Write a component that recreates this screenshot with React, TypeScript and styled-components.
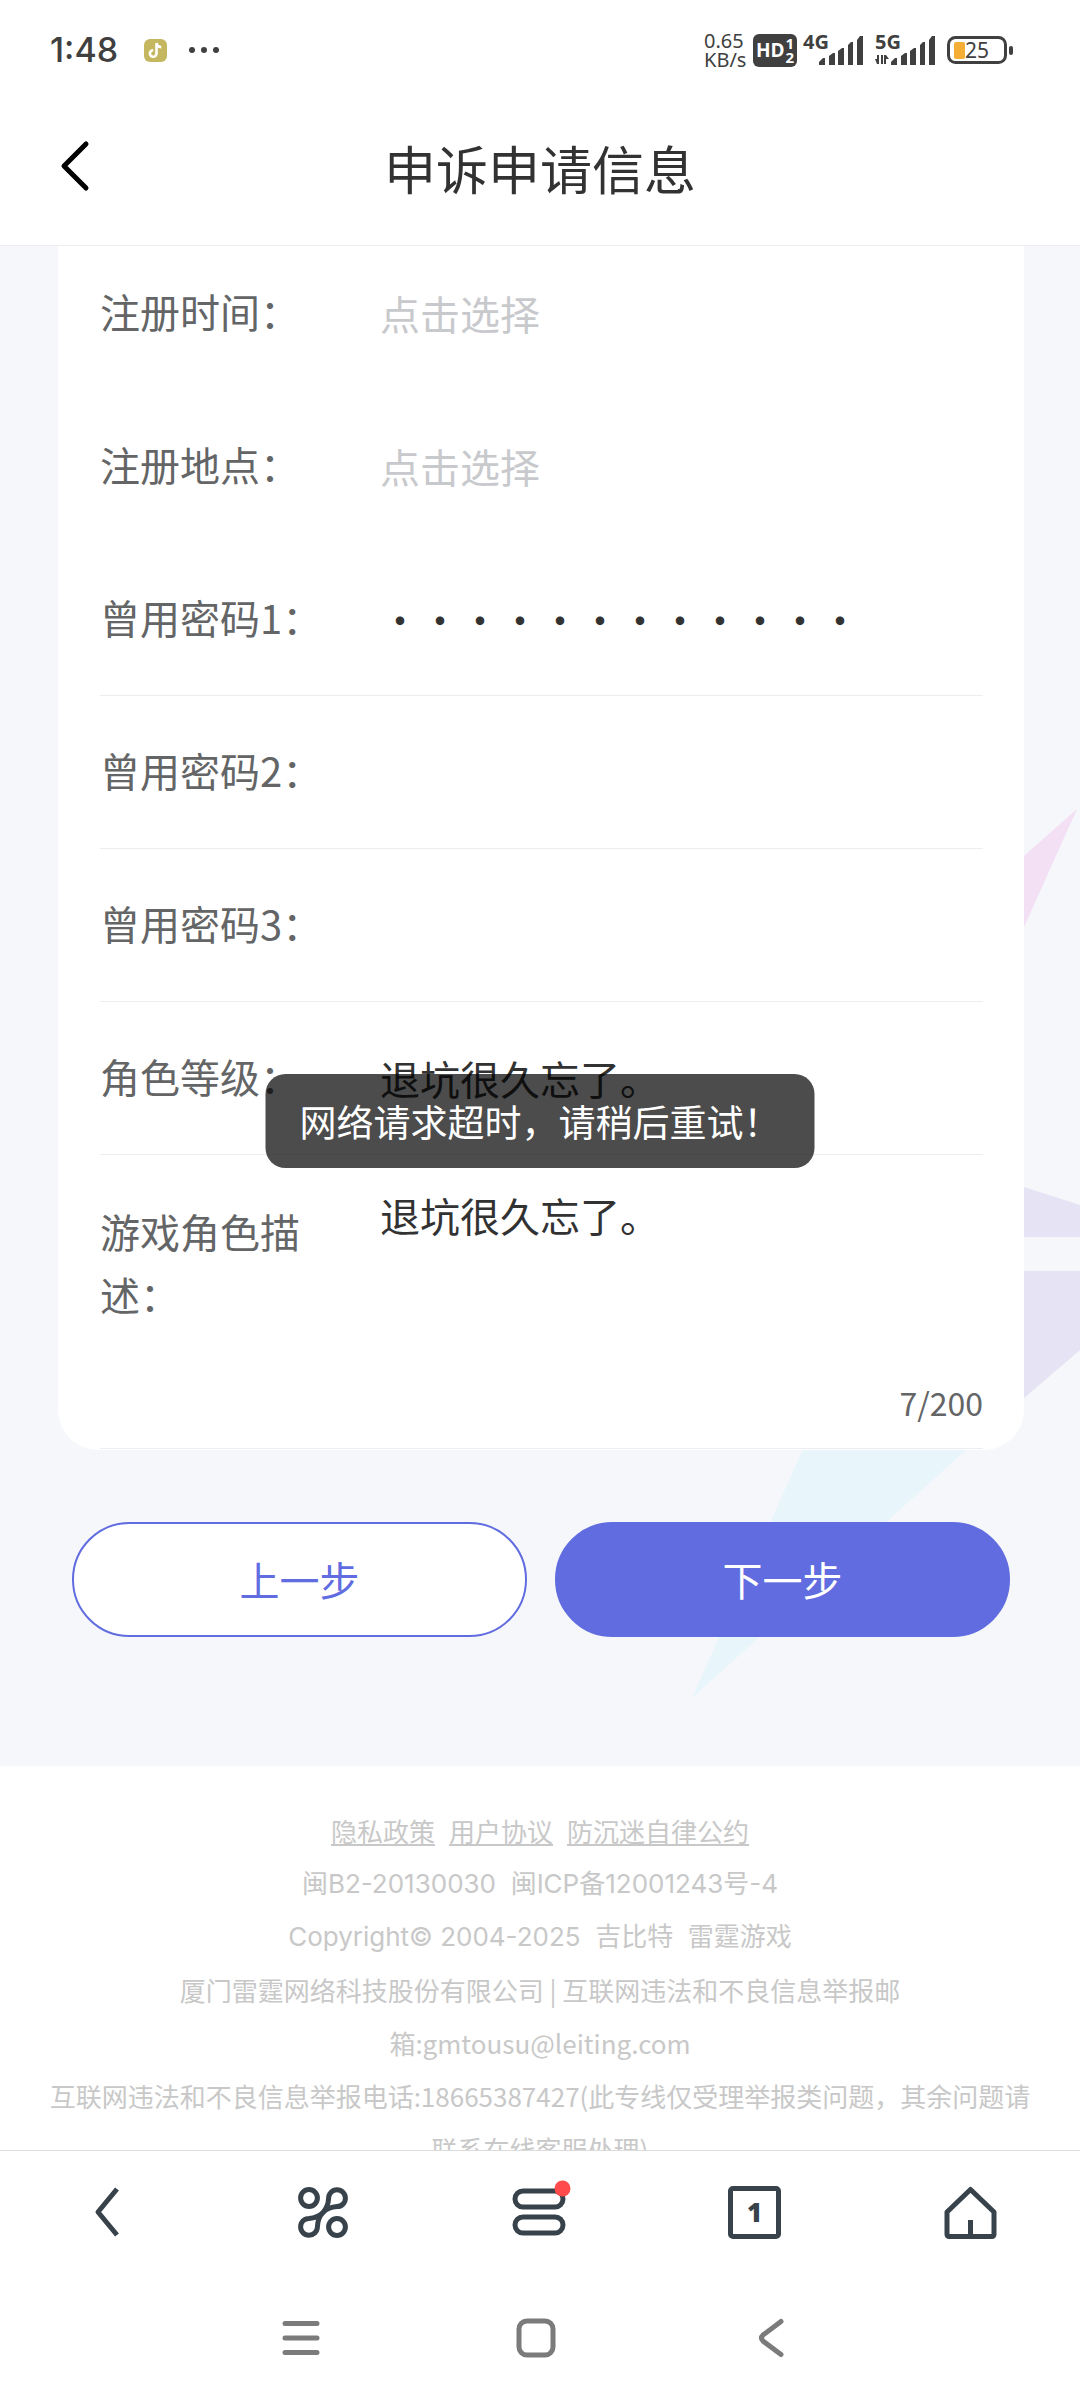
import React from "react";
import styled, { createGlobalStyle } from "styled-components";

const ink = "#323233";
const muted = "#646566";
const accent = "#606cdf";
const line = "#ebedf0";
const toolInk = "#37424a";

const GlobalStyle = createGlobalStyle`
  * { box-sizing: border-box; }
  body {
    margin: 0;
    background: #fff;
    color: ${ink};
    font-family: "Noto Sans CJK SC", "Noto Sans", sans-serif;
  }
  button, input, textarea { font: inherit; color: inherit; }
`;

const Screen = styled.div`
  display: flex;
  flex-direction: column;
  height: 100vh;
  position: relative;
  background: #fff;
`;

/* ---------- status bar ---------- */

const StatusBar = styled.div`
  display: flex;
  align-items: center;
  justify-content: space-between;
  height: 100px;
  flex: none;
  padding: 0 66px 0 50px;
  color: #404040;
  font-family: "Noto Sans", sans-serif;
`;

const StatusGroup = styled.div<{ $gap: number }>`
  display: flex;
  align-items: center;
  gap: ${(p) => p.$gap}px;
`;

const Clock = styled.span`
  padding-right: 4px;
  font: 500 34px/40px Inter, "Noto Sans", sans-serif;
`;

const Speed = styled.span`
  display: flex;
  flex-direction: column;
  width: 43px;
  font-size: 20px;
  line-height: 19px;
  white-space: nowrap;
`;

const HdBadge = styled.span`
  display: flex;
  align-items: center;
  justify-content: center;
  gap: 1px;
  width: 44px;
  height: 33px;
  border-radius: 6px;
  background: #404040;
  color: #fff;
  font: 700 19px/18px "Open Sans", sans-serif;
`;

const HdNumbers = styled.span`
  display: flex;
  flex-direction: column;
  font: 700 15px/14px "Open Sans", sans-serif;
`;

const Signal = styled.span`
  position: relative;
  display: block;
  width: 60px;
  height: 33px;
`;

const SignalLabel = styled.span`
  position: absolute;
  left: 0;
  top: 0;
  font: 700 20px/16px "Open Sans", sans-serif;
`;

const Battery = styled.span`
  position: relative;
  display: block;
  width: 67px;
  height: 28px;
`;

const BatteryText = styled.span`
  position: absolute;
  left: 18px;
  top: 0;
  font-size: 21px;
  line-height: 28px;
`;

/* ---------- header ---------- */

const Header = styled.header`
  display: grid;
  grid-template-columns: 150px 1fr 150px;
  align-items: start;
  height: 146px;
  flex: none;
  border-bottom: 1px solid ${line};
`;

const IconButton = styled.button`
  display: flex;
  align-items: center;
  justify-content: center;
  padding: 0;
  border: 0;
  background: none;
  cursor: pointer;
  height: 100%;
`;

const BackButton = styled(IconButton)`
  height: 132px;
`;

const Title = styled.h1`
  margin: 0;
  text-align: center;
  font-size: 52px;
  line-height: 136px;
  font-weight: 400;
`;

/* ---------- form ---------- */

const Viewport = styled.div`
  flex: 1;
  min-height: 0;
  overflow-y: auto;
  scrollbar-width: none;
`;

const FormArea = styled.main`
  position: relative;
  padding: 0 56px 129px 58px;
  background: #f5f7fb;
  overflow: hidden;
`;

const Shapes = styled.svg`
  position: absolute;
  right: 0;
  top: 563px;
`;

const Card = styled.div`
  position: relative;
  margin-top: -9px;
  padding: 0 41px 1px 42px;
  border-radius: 0 0 40px 40px;
  background: #fff;
`;

const Row = styled.div<{ $plain?: boolean }>`
  display: flex;
  gap: 40px;
  min-height: 153px;
  padding-top: 43px;
  border-bottom: 1px solid ${(p) => (p.$plain ? "transparent" : line)};
`;

const TallRow = styled(Row)`
  min-height: 294px;
  padding-top: 30px;
`;

const Label = styled.label`
  flex: none;
  width: 240px;
  color: ${muted};
  font-size: 40px;
  line-height: 63px;
`;

const TallLabel = styled(Label)`
  padding-top: 15px;
`;

const Field = styled.input`
  flex: 1;
  min-width: 0;
  height: 66px;
  padding: 0;
  border: 0;
  outline: 0;
  background: none;
  font-size: 40px;
  &::placeholder { color: #c8c9cc; opacity: 1; }
`;

const AreaColumn = styled.div`
  flex: 1;
  display: flex;
  flex-direction: column;
`;

const Area = styled.textarea`
  flex: 1;
  width: 100%;
  padding: 0;
  border: 0;
  outline: 0;
  resize: none;
  background: none;
  font-size: 40px;
  line-height: 60px;
`;

const Counter = styled.div`
  padding-bottom: 22px;
  text-align: right;
  color: ${muted};
  font-size: 32px;
  line-height: 48px;
`;

const Actions = styled.div`
  position: relative;
  display: flex;
  gap: 28px;
  padding: 72px 14px 0;
`;

const ActionButton = styled.button<{ $primary?: boolean }>`
  flex: 1;
  height: 115px;
  padding: 0 0 2px;
  border: 2px solid ${accent};
  border-radius: 58px;
  background: ${(p) => (p.$primary ? accent : "#fff")};
  color: ${(p) => (p.$primary ? "#fff" : accent)};
  font-size: 40px;
  cursor: pointer;
`;

/* ---------- footer ---------- */

const Footer = styled.footer`
  padding: 38px 40px 60px;
  text-align: center;
  color: #c8c8c8;
  font-size: 26px;
  line-height: 53px;
`;

const Notice = styled.p<{ $latin?: boolean }>`
  margin: 0;
  font-family: ${(p) => (p.$latin ? "Inter, " : "")}"Noto Sans CJK SC", sans-serif;
`;

const Links = styled.nav`
  display: flex;
  justify-content: center;
  gap: 14px;
  a { color: inherit; text-decoration: underline; }
`;

/* ---------- bottom bars ---------- */

const Toolbar = styled.nav`
  flex: none;
  display: grid;
  grid-template-columns: repeat(5, 1fr);
  height: 125px;
  padding: 0 2px 2px 0;
  border-top: 1px solid #dcdcdc;
  background: #fff;
  color: ${toolInk};
`;

const TabCount = styled.span`
  display: flex;
  align-items: center;
  justify-content: center;
  width: 53px;
  height: 53px;
  border: 5px solid ${toolInk};
  border-radius: 5px;
  font: 800 26px/30px "Open Sans", sans-serif;
`;

const SystemNav = styled.nav`
  flex: none;
  display: grid;
  grid-template-columns: repeat(3, 1fr);
  height: 125px;
  padding: 0 192px 0 184px;
  color: #7b7b7b;
`;

const Toast = styled.div`
  position: absolute;
  top: 1074px;
  left: 50%;
  transform: translateX(-50%);
  padding: 20px 34px;
  border-radius: 20px;
  background: rgba(0, 0, 0, 0.7);
  color: #fff;
  font-size: 37px;
  line-height: 54px;
  white-space: nowrap;
`;

function SignalBars({ label, arrows }: { label: string; arrows?: boolean }) {
  return (
    <Signal>
      <svg width="60" height="33" viewBox="1 1 60 33" fill="#404040" aria-hidden="true">
        <path d="M17 29l4-4h2v7h-6zM27 23l4-3h2v12h-6zM36 18l4-3h2v17h-6zM46 12l3-3h2v23h-5zM55 7l3-4h3v29h-6z" />
        {arrows && <path d="M5 22v9H3l-2-5h2v-4zM7 22h2v9H7zM10 22h2l3 4h-3v5h-2z" />}
      </svg>
      <SignalLabel>{label}</SignalLabel>
    </Signal>
  );
}

const rows = [
  { id: "reg-time", label: "注册时间：", placeholder: "点击选择", plain: true, readOnly: true },
  { id: "reg-place", label: "注册地点：", placeholder: "点击选择", plain: true, readOnly: true },
  { id: "pwd1", label: "曾用密码1：", type: "password", value: "abcdefghijkl" },
  { id: "pwd2", label: "曾用密码2：", type: "password" },
  { id: "pwd3", label: "曾用密码3：", type: "password" },
  { id: "level", label: "角色等级：", value: "退坑很久忘了。" },
];

export default function App() {
  const [text, setText] = React.useState("退坑很久忘了。");
  return (
    <>
      <GlobalStyle />
      <Screen>
        <StatusBar>
          <StatusGroup $gap={22}>
            <Clock>1:48</Clock>
            <svg width="23" height="23" viewBox="0 0 23 23" aria-hidden="true">
              <rect width="23" height="23" rx="6" fill="#c5b75f" />
              <path
                d="M12.5 4v10.5a3.3 3.3 0 1 1-3.3-3.3M12.5 4c.4 2.700 2 4 4.800 4.300"
                fill="none"
                stroke="#fff"
                strokeWidth="2.600"
              />
            </svg>
            <svg width="32" height="8" viewBox="0 0 32 8" fill="#404040" aria-hidden="true">
              <circle cx="3" cy="4" r="3" />
              <circle cx="15" cy="4" r="3" />
              <circle cx="27" cy="4" r="3" />
            </svg>
          </StatusGroup>
          <StatusGroup $gap={12}>
            <StatusGroup $gap={6}>
              <Speed>
                <span>0.65</span>
                <span>KB/s</span>
              </Speed>
              <HdBadge>
                HD
                <HdNumbers>
                  <span>1</span>
                  <span>2</span>
                </HdNumbers>
              </HdBadge>
              <SignalBars label="4G" />
            </StatusGroup>
            <SignalBars label="5G" arrows />
            <Battery>
              <svg width="67" height="28" viewBox="0 0 67 28" aria-hidden="true">
                <rect x="1.500" y="1.500" width="57" height="25" rx="7" fill="none" stroke="#404040" strokeWidth="3" />
                <rect x="7" y="6" width="11" height="17" rx="2" fill="#f5ae35" />
                <rect x="62" y="10" width="4" height="9" rx="2" fill="#404040" />
              </svg>
              <BatteryText>25</BatteryText>
            </Battery>
          </StatusGroup>
        </StatusBar>

        <Header>
          <BackButton type="button" aria-label="返回">
            <svg width="30" height="52" viewBox="0 0 30 52" fill="none" stroke="#000" strokeWidth="5" strokeLinecap="round" strokeLinejoin="round">
              <path d="M26 4L4 26l22 22" />
            </svg>
          </BackButton>
          <Title>申诉申请信息</Title>
        </Header>

        <Viewport>
          <FormArea>
            <Shapes width="388" height="889" viewBox="0 0 388 889" aria-hidden="true">
              <path d="M385 0L332 47v71z" fill="#f4e0f4" />
              <path d="M332 378l56 18v32h-56zM332 462h56v79l-56 48z" fill="#e6e3f4" />
              <path d="M111 640h164L0 889z" fill="#e8f6fb" />
            </Shapes>
            <form onSubmit={(e) => e.preventDefault()}>
              <Card>
                {rows.map((r) => (
                  <Row key={r.id} $plain={r.plain}>
                    <Label htmlFor={r.id}>{r.label}</Label>
                    <Field
                      id={r.id}
                      type={r.type ?? "text"}
                      placeholder={r.placeholder}
                      defaultValue={r.value}
                      readOnly={r.readOnly}
                      autoComplete="off"
                    />
                  </Row>
                ))}
                <TallRow>
                  <TallLabel htmlFor="desc">游戏角色描述：</TallLabel>
                  <AreaColumn>
                    <Area id="desc" maxLength={200} value={text} onChange={(e) => setText(e.target.value)} />
                    <Counter>{text.length}/200</Counter>
                  </AreaColumn>
                </TallRow>
              </Card>
              <Actions>
                <ActionButton type="button">上一步</ActionButton>
                <ActionButton type="submit" $primary>
                  下一步
                </ActionButton>
              </Actions>
            </form>
          </FormArea>
          <Footer>
            <Links>
              <a href="#privacy">隐私政策</a>
              <a href="#terms">用户协议</a>
              <a href="#pledge">防沉迷自律公约</a>
            </Links>
            <Notice $latin>闽B2-20130030&nbsp; 闽ICP备12001243号-4</Notice>
            <Notice $latin>Copyright© 2004-2025&nbsp; 吉比特&nbsp; 雷霆游戏</Notice>
            <Notice>厦门雷霆网络科技股份有限公司 | 互联网违法和不良信息举报邮箱:gmtousu@leiting.com</Notice>
            <Notice>互联网违法和不良信息举报电话:18665387427(此专线仅受理举报类问题，其余问题请联系在线客服处理)</Notice>
          </Footer>
        </Viewport>

        <Toolbar aria-label="浏览器">
          <IconButton type="button" aria-label="后退">
            <svg width="28" height="50" viewBox="0 0 28 50" fill="none" stroke="currentColor" strokeWidth="5" strokeLinejoin="round">
              <path d="M23 2L4 25l19 23" />
            </svg>
          </IconButton>
          <IconButton type="button" aria-label="小程序">
            <svg width="50" height="51" viewBox="0 0 50 51" fill="none" stroke="currentColor" strokeWidth="5" strokeLinejoin="round">
              <circle cx="11" cy="11" r="8.400" />
              <circle cx="39" cy="40" r="8.400" />
              <path d="M25 25.500C29 21 30.400 17 30.600 11.200A8.400 8.400 0 1 1 39 19.600C33 20 29.500 21 25 25.500C21 29.500 19.600 34 19.400 40A8.400 8.400 0 1 1 11 31.400C17 31 20.500 30 25 25.500Z" />
            </svg>
          </IconButton>
          <IconButton type="button" aria-label="菜单">
            <svg width="66" height="66" viewBox="0 0 66 66" fill="none" stroke="currentColor" strokeWidth="5">
              <rect x="9" y="12" width="48" height="16" rx="8" />
              <rect x="9" y="38" width="48" height="16" rx="8" />
              <circle cx="56.500" cy="9.500" r="8" fill="#ff4b4b" stroke="none" />
            </svg>
          </IconButton>
          <IconButton type="button" aria-label="标签页">
            <TabCount>1</TabCount>
          </IconButton>
          <IconButton type="button" aria-label="主页">
            <svg width="53" height="53" viewBox="0 0 53 53" fill="none" stroke="currentColor" strokeWidth="5" strokeLinejoin="round">
              <path d="M26.500 3.500L50 26v22.500a2 2 0 0 1-2 2H5a2 2 0 0 1-2-2V26zM26.500 34v17" />
            </svg>
          </IconButton>
        </Toolbar>

        <SystemNav aria-label="系统导航">
          <IconButton type="button" aria-label="最近任务">
            <svg width="38" height="38" viewBox="0 0 38 38" fill="none" stroke="currentColor" strokeWidth="5" strokeLinecap="round">
              <path d="M3 4.500h32M3 19h32M3 33.500h32" />
            </svg>
          </IconButton>
          <IconButton type="button" aria-label="桌面">
            <svg width="40" height="40" viewBox="0 0 40 40" fill="none" stroke="currentColor" strokeWidth="5">
              <rect x="3" y="3" width="34" height="34" rx="8" />
            </svg>
          </IconButton>
          <IconButton type="button" aria-label="返回上一级">
            <svg width="28" height="40" viewBox="0 0 28 40" fill="none" stroke="currentColor" strokeWidth="5" strokeLinecap="round">
              <path d="M24 3.500L6 17q-3 3 0 6l18 13.500" />
            </svg>
          </IconButton>
        </SystemNav>

        <Toast role="status">网络请求超时，请稍后重试！</Toast>
      </Screen>
    </>
  );
}
